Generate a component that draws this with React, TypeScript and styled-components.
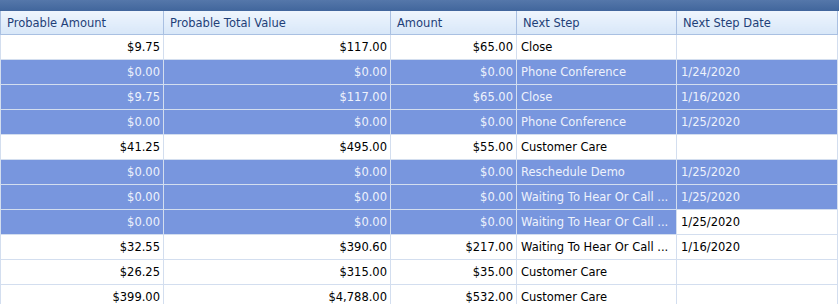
import React from "react";
import styled, { createGlobalStyle } from "styled-components";

const GlobalStyle = createGlobalStyle`
  html, body {
    margin: 0;
    padding: 0;
    background: #ffffff;
  }
  body {
    font-family: "DejaVu Sans", Tahoma, Verdana, sans-serif;
    overflow: hidden;
  }
`;

const Grid = styled.div`
  width: 839px;
  height: 304px;
  overflow: hidden;
  background: #ffffff;
`;

const TopBar = styled.div`
  height: 11px;
  background: linear-gradient(#5577aa, #41669c);
`;

const Table = styled.table`
  border-collapse: collapse;
  table-layout: fixed;
  width: 838px;
  font-size: 11.5px;
`;

const HeadCell = styled.th`
  height: 23px;
  padding: 0 0 0 6px;
  text-align: left;
  font-weight: normal;
  color: #1f3f78;
  background: linear-gradient(#eef5fd, #d8e7f8);
  border: 1px solid #a9c0e2;
  border-top: none;
  white-space: nowrap;
  overflow: hidden;
`;

const Row = styled.tr<{ $selected?: boolean }>`
  background: ${({ $selected }) => ($selected ? "#7896de" : "#ffffff")};
  color: ${({ $selected }) => ($selected ? "#eef2fc" : "#000000")};
`;

const Cell = styled.td<{ $align?: "left" | "right"; $focused?: boolean }>`
  height: 24px;
  padding: 0 3px 0 4px;
  text-align: ${({ $align }) => $align || "left"};
  border: 1px solid #d3deef;
  white-space: nowrap;
  overflow: hidden;
  ${({ $focused }) => ($focused ? "background: #ffffff; color: #000000;" : "")}
`;

type Rec = {
  prob: string;
  total: string;
  amount: string;
  step: string;
  date: string;
  selected?: boolean;
  focused?: boolean;
};

const waiting = "Waiting To Hear Or Call ...";

const rows: Rec[] = [
  { prob: "$9.75", total: "$117.00", amount: "$65.00", step: "Close", date: "" },
  { prob: "$0.00", total: "$0.00", amount: "$0.00", step: "Phone Conference", date: "1/24/2020", selected: true },
  { prob: "$9.75", total: "$117.00", amount: "$65.00", step: "Close", date: "1/16/2020", selected: true },
  { prob: "$0.00", total: "$0.00", amount: "$0.00", step: "Phone Conference", date: "1/25/2020", selected: true },
  { prob: "$41.25", total: "$495.00", amount: "$55.00", step: "Customer Care", date: "" },
  { prob: "$0.00", total: "$0.00", amount: "$0.00", step: "Reschedule Demo", date: "1/25/2020", selected: true },
  { prob: "$0.00", total: "$0.00", amount: "$0.00", step: waiting, date: "1/25/2020", selected: true },
  { prob: "$0.00", total: "$0.00", amount: "$0.00", step: waiting, date: "1/25/2020", selected: true, focused: true },
  { prob: "$32.55", total: "$390.60", amount: "$217.00", step: waiting, date: "1/16/2020" },
  { prob: "$26.25", total: "$315.00", amount: "$35.00", step: "Customer Care", date: "" },
  { prob: "$399.00", total: "$4,788.00", amount: "$532.00", step: "Customer Care", date: "" },
];

const columns = [
  { title: "Probable Amount", width: 163 },
  { title: "Probable Total Value", width: 227 },
  { title: "Amount", width: 126 },
  { title: "Next Step", width: 160 },
  { title: "Next Step Date", width: 161 },
];

export default function App() {
  return (
    <Grid>
      <GlobalStyle />
      <TopBar />
      <Table>
        <colgroup>
          {columns.map((c) => (
            <col key={c.title} style={{ width: c.width }} />
          ))}
        </colgroup>
        <thead>
          <tr>
            {columns.map((c) => (
              <HeadCell key={c.title}>{c.title}</HeadCell>
            ))}
          </tr>
        </thead>
        <tbody>
          {rows.map((r, i) => (
            <Row key={i} $selected={r.selected}>
              <Cell $align="right">{r.prob}</Cell>
              <Cell $align="right">{r.total}</Cell>
              <Cell $align="right">{r.amount}</Cell>
              <Cell>{r.step}</Cell>
              <Cell $focused={r.focused}>{r.date}</Cell>
            </Row>
          ))}
        </tbody>
      </Table>
    </Grid>
  );
}
